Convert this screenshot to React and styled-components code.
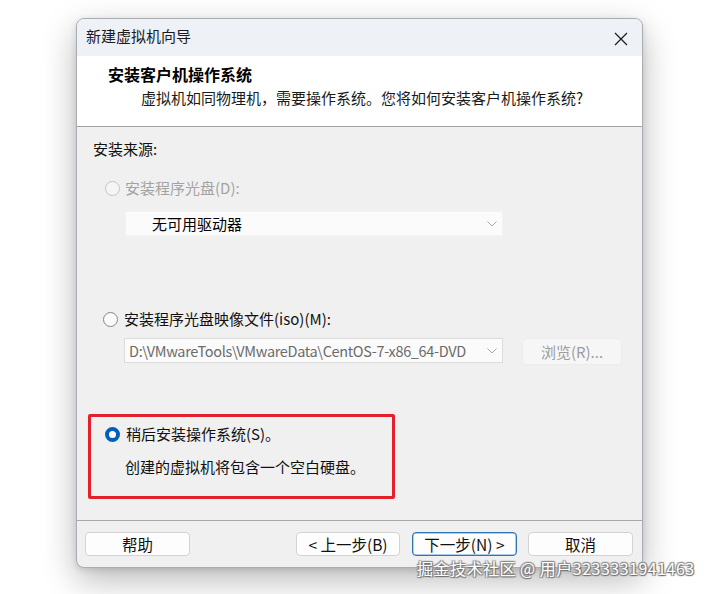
import React from 'react';
import styled, { createGlobalStyle } from 'styled-components';

const FONT = '"Noto Sans CJK SC", "Noto Sans", sans-serif';

const GlobalStyle = createGlobalStyle`
  html, body {
    margin: 0;
    padding: 0;
    background: #ffffff;
  }
  body {
    font-family: ${FONT};
    font-size: 15px;
    color: #000;
  }
`;

const Page = styled.div`
  position: relative;
  width: 709px;
  height: 594px;
  padding: 18px 0 0 76px;
  box-sizing: border-box;
  overflow: hidden;
`;

const Dialog = styled.div`
  width: 567px;
  height: 550px;
  box-sizing: border-box;
  display: flex;
  flex-direction: column;
  border: 1px solid #a9acb0;
  border-radius: 8px;
  overflow: hidden;
  background: #f0f0f0;
  box-shadow: 0 12px 34px rgba(0, 0, 0, 0.28), 0 2px 6px rgba(0, 0, 0, 0.12);
`;

const TitleBar = styled.div`
  height: 37px;
  flex: 0 0 auto;
  display: flex;
  align-items: center;
  justify-content: space-between;
  padding: 0 14px 0 9px;
  background: #eef1f5;
  line-height: 20px;
`;

const Title = styled.span`
  margin-top: -4px;
  color: #1b1b1b;
`;

const CloseIcon = styled.svg`
  width: 14px;
  height: 14px;
  margin-top: 2px;
`;

const Header = styled.div`
  height: 71px;
  flex: 0 0 auto;
  box-sizing: border-box;
  padding: 8px 0 0 31px;
  background: #ffffff;
  border-bottom: 1px solid #a3a3a3;
  line-height: 20px;
`;

const Heading = styled.div`
  font-size: 16px;
  font-weight: 700;
`;

const Subtitle = styled.div`
  margin: 4px 0 0 33px;
  color: #1a1a1a;
`;

const Body = styled.div`
  flex: 1 1 auto;
  display: flex;
  flex-direction: column;
  align-items: flex-start;
  padding: 12px 0 0 16px;
  line-height: 20px;
`;

const SourceLabel = styled.div`
  color: #111;
`;

const RadioRow = styled.label`
  display: flex;
  align-items: center;
  gap: ${(p) => p.$gap || 5}px;
  margin: ${(p) => p.$margin};
  color: ${(p) => (p.$disabled ? '#a3a3a3' : '#111')};
`;

const RadioDot = styled.span`
  width: 15px;
  height: 15px;
  box-sizing: border-box;
  border-radius: 50%;
  flex: 0 0 auto;
  border: ${(p) =>
    p.$checked ? '4px solid #005fb8' : `1px solid ${p.$disabled ? '#c4c4c4' : '#858585'}`};
  background: ${(p) => (p.$checked ? '#ffffff' : p.$disabled ? '#f5f5f5' : '#fafafa')};
`;

const ComboBox = styled.div`
  margin: ${(p) => p.$margin || 0};
  width: ${(p) => p.$width}px;
  height: 25px;
  box-sizing: border-box;
  display: flex;
  align-items: center;
  justify-content: space-between;
  padding: 0 5px 0 ${(p) => p.$padLeft}px;
  background: #fbfbfb;
  border: 1px solid ${(p) => (p.$bordered ? '#dcdcdc' : '#f3f3f3')};
  color: ${(p) => p.$color || '#000'};
  font-size: ${(p) => p.$size || 15}px;
  letter-spacing: ${(p) => p.$spacing || 0}px;
  white-space: nowrap;
  overflow: hidden;
`;

const ComboText = styled.span`
  overflow: hidden;
`;

const Chevron = styled.svg`
  width: 10px;
  height: 6px;
  flex: 0 0 auto;
  margin-left: 6px;
`;

const IsoRow = styled.div`
  display: flex;
  align-items: flex-start;
  gap: 19px;
  margin: 9px 0 0 31px;
`;

const BrowseButton = styled.div`
  width: 100px;
  height: 27px;
  box-sizing: border-box;
  display: flex;
  align-items: center;
  justify-content: center;
  background: #f6f6f6;
  border: 1px solid #ececec;
  border-radius: 4px;
  color: #9d9d9d;
`;

const Highlight = styled.div`
  width: 307px;
  height: 85px;
  box-sizing: border-box;
  margin: 49px 0 0 -5px;
  padding: 7px 0 0 14px;
  border: 3px solid #e4212b;
  border-radius: 2px;
`;

const Note = styled.div`
  margin: 13px 0 0 20px;
  color: #111;
`;

const Footer = styled.div`
  flex: 0 0 auto;
  height: 47px;
  box-sizing: border-box;
  display: flex;
  align-items: flex-start;
  padding: 11px 9px 0 8px;
  border-top: 1px solid #a8a8a8;
`;

const Button = styled.div`
  width: ${(p) => p.$width || 105}px;
  height: 24px;
  box-sizing: border-box;
  display: flex;
  align-items: center;
  justify-content: center;
  margin-left: ${(p) => p.$gap || 0}px;
  background: #fdfdfd;
  border: 1px solid ${(p) => (p.$focused ? '#2f75b5' : '#d3d3d3')};
  box-shadow: ${(p) => (p.$focused ? 'inset 0 0 0 0.5px #5b9bd5' : 'none')};
  border-radius: 4px;
  color: #111;
  font-size: 15.5px;
  line-height: 20px;
`;

const Spacer = styled.div`
  flex: 1;
`;

const Watermark = styled.div`
  position: absolute;
  left: 417px;
  top: 557px;
  font-size: 16px;
  line-height: 22px;
  letter-spacing: 0.5px;
  color: #ffffff;
  white-space: nowrap;
  text-shadow: 1px 1px 1px #6e6e6e, -1px -1px 1px #8a8a8a, 1px -1px 1px #8a8a8a,
    -1px 1px 1px #8a8a8a;
`;

const ChevronDown = () => (
  <Chevron viewBox="0 0 10 6">
    <path d="M0.5 0.5 L5 5 L9.5 0.5" fill="none" stroke="#a8a8a8" strokeWidth="1" />
  </Chevron>
);

export default function App() {
  return (
    <>
      <GlobalStyle />
      <Page>
        <Dialog>
          <TitleBar>
            <Title>新建虚拟机向导</Title>
            <CloseIcon viewBox="0 0 14 14">
              <path d="M1 1 L13 13 M13 1 L1 13" stroke="#1b1b1b" strokeWidth="1.2" />
            </CloseIcon>
          </TitleBar>
          <Header>
            <Heading>安装客户机操作系统</Heading>
            <Subtitle>虚拟机如同物理机，需要操作系统。您将如何安装客户机操作系统?</Subtitle>
          </Header>
          <Body>
            <SourceLabel>安装来源:</SourceLabel>
            <RadioRow $disabled $margin="19px 0 0 12px">
              <RadioDot $disabled />
              安装程序光盘(D):
            </RadioRow>
            <ComboBox $margin="13px 0 0 32px" $width={378} $padLeft={26}>
              <ComboText>无可用驱动器</ComboText>
              <ChevronDown />
            </ComboBox>
            <RadioRow $margin="73px 0 0 10px" $gap={6}>
              <RadioDot />
              安装程序光盘映像文件(iso)(M):
            </RadioRow>
            <IsoRow>
              <ComboBox
                $width={379}
                $padLeft={4}
                $bordered
                $color="#6b6b6b"
                $size={14.5}
                $spacing={-0.35}
              >
                <ComboText>D:\VMwareTools\VMwareData\CentOS-7-x86_64-DVD</ComboText>
                <ChevronDown />
              </ComboBox>
              <BrowseButton>浏览(R)...</BrowseButton>
            </IsoRow>
            <Highlight>
              <RadioRow $gap={6}>
                <RadioDot $checked />
                稍后安装操作系统(S)。
              </RadioRow>
              <Note>创建的虚拟机将包含一个空白硬盘。</Note>
            </Highlight>
          </Body>
          <Footer>
            <Button>帮助</Button>
            <Spacer />
            <Button $width={104}>&lt; 上一步(B)</Button>
            <Button $gap={12} $focused>下一步(N) &gt;</Button>
            <Button $gap={11}>取消</Button>
          </Footer>
        </Dialog>
        <Watermark>掘金技术社区 @ 用户3233331941463</Watermark>
      </Page>
    </>
  );
}
